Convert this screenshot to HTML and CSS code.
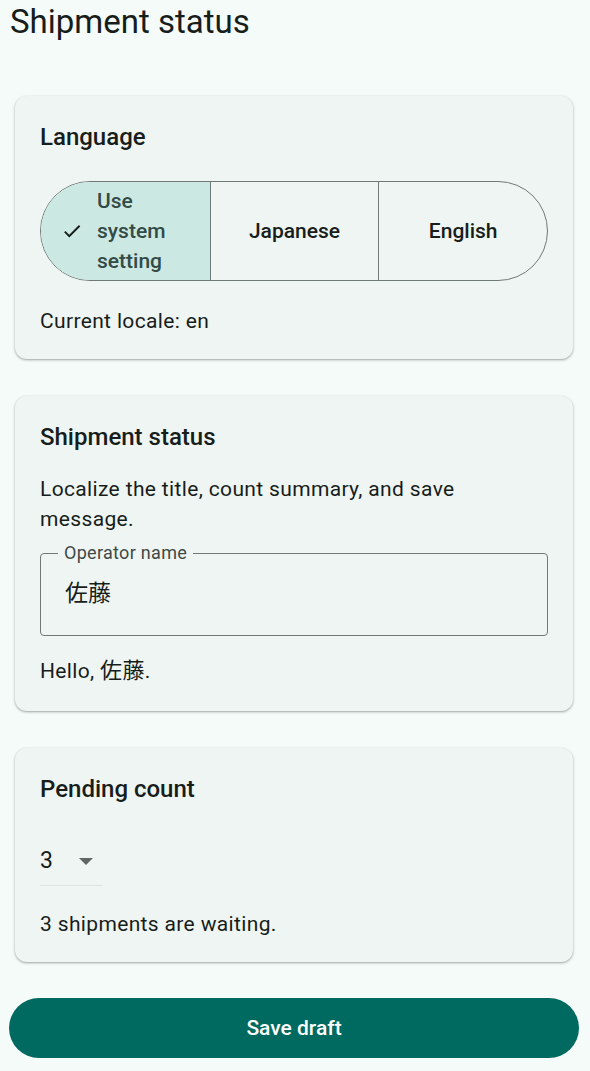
FILE: index.html
```html
<!DOCTYPE html>
<html lang="en">
<head>
<meta charset="utf-8">
<title>Shipment status</title>
<link rel="stylesheet" href="styles.css">
</head>
<body>
<main class="page">
  <h1 class="page-title">Shipment status</h1>

  <section class="card">
    <h2 class="card-title">Language</h2>
    <div class="segmented">
      <button class="segment selected">
        <svg class="check" viewBox="0 0 24 24" width="22" height="22" aria-hidden="true"><path d="M9 16.17L4.83 12l-1.42 1.41L9 19 21 7l-1.41-1.41z"/></svg>
        <span class="segment-label">Use system setting</span>
      </button>
      <button class="segment"><span class="segment-label">Japanese</span></button>
      <button class="segment"><span class="segment-label">English</span></button>
    </div>
    <p class="body-text locale">Current locale: en</p>
  </section>

  <section class="card">
    <h2 class="card-title">Shipment status</h2>
    <p class="body-text desc">Localize the title, count summary, and save message.</p>
    <div class="field">
      <span class="field-label">Operator name</span>
      <span class="field-value">佐藤</span>
    </div>
    <p class="body-text hello">Hello, <span class="cjk">佐藤</span>.</p>
  </section>

  <section class="card">
    <h2 class="card-title">Pending count</h2>
    <div class="dropdown">
      <span class="dropdown-value">3</span>
      <span class="dropdown-arrow"></span>
    </div>
    <p class="body-text waiting">3 shipments are waiting.</p>
  </section>

  <button class="primary">Save draft</button>
</main>
</body>
</html>
```

FILE: styles.css
```css
* { box-sizing: border-box; }

html, body {
  margin: 0;
  background: #f4fbf8;
}

body {
  font-family: Roboto, "Noto Sans CJK JP", sans-serif;
  color: #171d1b;
}

.page {
  display: flex;
  flex-direction: column;
  padding: 4px 11px 0 9px;
}

.page-title {
  margin: 0 0 0 1px;
  font-size: 33px;
  font-weight: 400;
  line-height: 36px;
}

.card {
  margin: 56px 6px 0 6px;
  background: #eff5f2;
  border-radius: 12px;
  padding: 26px 25px 23px 25px;
  box-shadow: 0 1px 2px rgba(0,0,0,0.25), 0 1px 3px 1px rgba(0,0,0,0.08);
}

.card + .card { margin-top: 37px; }

.card-title {
  margin: 0;
  font-size: 24px;
  font-weight: 500;
  line-height: 30px;
}

.body-text {
  margin: 0;
  font-size: 21px;
  line-height: 30px;
  letter-spacing: 0.35px;
}

.segmented {
  margin-top: 29px;
  display: grid;
  grid-template-columns: 1fr 1fr 1fr;
  height: 100px;
  border: 1px solid #6f7977;
  border-radius: 50px;
  overflow: hidden;
}

.segment {
  display: flex;
  align-items: center;
  justify-content: center;
  gap: 14px;
  background: transparent;
  border: 0;
  border-left: 1px solid #6f7977;
  padding: 0 12px;
  font-family: Roboto, sans-serif;
  font-size: 21px;
  font-weight: 500;
  line-height: 30px;
  color: #171d1b;
}

.segment:first-child { border-left: 0; }

.segment.selected {
  background: #cce8e2;
  color: #334b47;
  justify-content: flex-start;
  padding-left: 20px;
}

.segment.selected .segment-label {
  text-align: left;
  width: 80px;
}

.check { fill: #171d1b; flex: none; }

.locale { margin-top: 25px; }

.desc { margin-top: 22px; }

.field {
  position: relative;
  margin-top: 19px;
  height: 83px;
  display: flex;
  align-items: center;
  padding: 0 24px;
  border: 1px solid #6f7977;
  border-radius: 4px;
}

.field-label {
  position: absolute;
  top: -11px;
  left: 17px;
  padding: 0 6px;
  background: #eff5f2;
  font-size: 18px;
  line-height: 20px;
  color: #3f4947;
  letter-spacing: 0.3px;
}

.field-value {
  margin-top: -8px;
  font-family: "Noto Sans CJK JP", sans-serif;
  font-size: 23px;
  line-height: 30px;
}

.cjk { font-family: "Noto Sans CJK JP", sans-serif; font-size: 22px; }

.hello { margin: 17px 0 2px 0; }

.dropdown {
  margin-top: 33px;
  width: 63px;
  height: 49px;
  display: flex;
  align-items: center;
  gap: 26px;
  border-bottom: 1px solid #dde4e1;
}

.dropdown-value {
  font-size: 23px;
  line-height: 30px;
}

.dropdown-arrow {
  width: 0;
  height: 0;
  border-left: 7px solid transparent;
  border-right: 7px solid transparent;
  border-top: 7px solid #5f6664;
}

.waiting { margin-top: 23px; }

.primary {
  margin-top: 36px;
  height: 60px;
  border: 0;
  border-radius: 30px;
  background: #006a60;
  color: #ffffff;
  font-family: Roboto, sans-serif;
  font-size: 21px;
  font-weight: 500;
}
```
